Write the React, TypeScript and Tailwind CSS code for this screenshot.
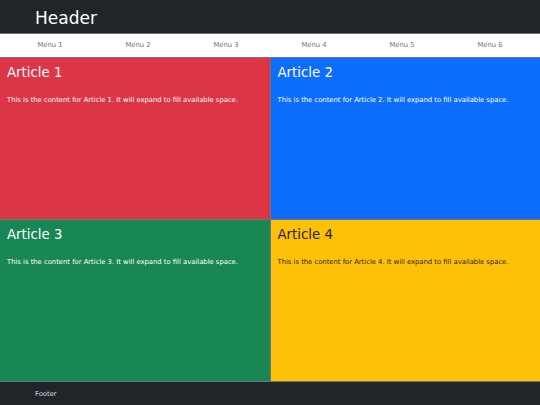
const menus = ["Menu 1", "Menu 2", "Menu 3", "Menu 4", "Menu 5", "Menu 6"];

const articles = [
  { n: 1, bg: "bg-[#dc3545]", text: "text-white" },
  { n: 2, bg: "bg-[#0d6efd]", text: "text-white" },
  { n: 3, bg: "bg-[#198754]", text: "text-white" },
  { n: 4, bg: "bg-[#ffc107]", text: "text-[#212529]" },
];

export default function App() {
  return (
    <div
      className="h-screen grid grid-rows-[33px_23px_1fr_23px] gap-px bg-[#6c757d]"
      style={{ fontFamily: '"DejaVu Sans", Verdana, sans-serif' }}
    >
      <header className="bg-[#212529] text-white flex items-center px-[35px] pt-[3px]">
        <h1 className="text-[17px] leading-none">Header</h1>
      </header>
      <nav className="bg-white grid grid-cols-6 px-[6px]">
        {menus.map((m) => (
          <a key={m} className="flex items-center justify-center text-[6.8px] text-[#6c757d]">
            {m}
          </a>
        ))}
      </nav>
      <main className="grid grid-cols-2 grid-rows-2 gap-px">
        {articles.map((a) => (
          <article key={a.n} className={`${a.bg} ${a.text} px-[7px] pt-[6px]`}>
            <h2 className="text-[13.3px] leading-[18px]">Article {a.n}</h2>
            <p className="text-[6.8px] mt-[13px]">
              This is the content for Article {a.n}. It will expand to fill available space.
            </p>
          </article>
        ))}
      </main>
      <footer className="bg-[#212529] text-[#ddd] flex items-center px-[35px] pt-[2px]">
        <span className="text-[6.8px]">Footer</span>
      </footer>
    </div>
  );
}
